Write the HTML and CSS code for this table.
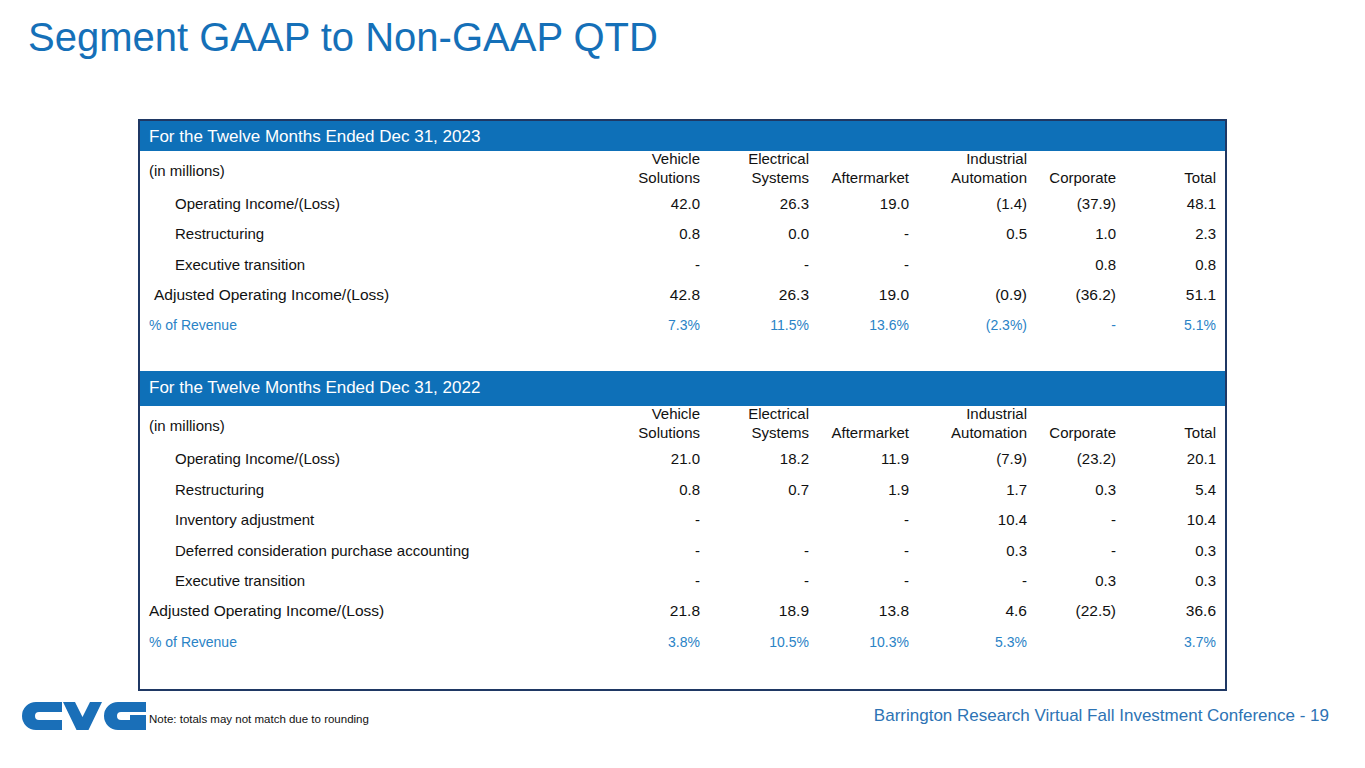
FILE: index.html
```html
<!DOCTYPE html>
<html>
<head>
<meta charset="utf-8">
<link rel="stylesheet" href="styles.css">
</head>
<body>
<h1 class="title">Segment GAAP to Non-GAAP QTD</h1>
<div class="box">
  <div class="band band1">For the Twelve Months Ended Dec 31, 2023</div>
  <div class="row head h1row">
    <div class="label">(in millions)</div>
    <div class="num">Vehicle<br>Solutions</div>
    <div class="num">Electrical<br>Systems</div>
    <div class="num">Aftermarket</div>
    <div class="num">Industrial<br>Automation</div>
    <div class="num">Corporate</div>
    <div class="num">Total</div>
  </div>
  <div class="row"><div class="label sub">Operating Income/(Loss)</div><div class="num">42.0</div><div class="num">26.3</div><div class="num">19.0</div><div class="num">(1.4)</div><div class="num">(37.9)</div><div class="num">48.1</div></div>
  <div class="row"><div class="label sub">Restructuring</div><div class="num">0.8</div><div class="num">0.0</div><div class="num">-</div><div class="num">0.5</div><div class="num">1.0</div><div class="num">2.3</div></div>
  <div class="row"><div class="label sub">Executive transition</div><div class="num">-</div><div class="num">-</div><div class="num">-</div><div class="num"></div><div class="num">0.8</div><div class="num">0.8</div></div>
  <div class="row adj"><div class="label lead">Adjusted Operating Income/(Loss)</div><div class="num">42.8</div><div class="num">26.3</div><div class="num">19.0</div><div class="num">(0.9)</div><div class="num">(36.2)</div><div class="num">51.1</div></div>
  <div class="row pct"><div class="label">% of Revenue</div><div class="num">7.3%</div><div class="num">11.5%</div><div class="num">13.6%</div><div class="num">(2.3%)</div><div class="num">-</div><div class="num">5.1%</div></div>
  <div class="spacer"></div>
  <div class="band band2">For the Twelve Months Ended Dec 31, 2022</div>
  <div class="row head h2row">
    <div class="label">(in millions)</div>
    <div class="num">Vehicle<br>Solutions</div>
    <div class="num">Electrical<br>Systems</div>
    <div class="num">Aftermarket</div>
    <div class="num">Industrial<br>Automation</div>
    <div class="num">Corporate</div>
    <div class="num">Total</div>
  </div>
  <div class="row"><div class="label sub">Operating Income/(Loss)</div><div class="num">21.0</div><div class="num">18.2</div><div class="num">11.9</div><div class="num">(7.9)</div><div class="num">(23.2)</div><div class="num">20.1</div></div>
  <div class="row"><div class="label sub">Restructuring</div><div class="num">0.8</div><div class="num">0.7</div><div class="num">1.9</div><div class="num">1.7</div><div class="num">0.3</div><div class="num">5.4</div></div>
  <div class="row"><div class="label sub">Inventory adjustment</div><div class="num">-</div><div class="num"></div><div class="num">-</div><div class="num">10.4</div><div class="num">-</div><div class="num">10.4</div></div>
  <div class="row"><div class="label sub">Deferred consideration purchase accounting</div><div class="num">-</div><div class="num">-</div><div class="num">-</div><div class="num">0.3</div><div class="num">-</div><div class="num">0.3</div></div>
  <div class="row"><div class="label sub">Executive transition</div><div class="num">-</div><div class="num">-</div><div class="num">-</div><div class="num">-</div><div class="num">0.3</div><div class="num">0.3</div></div>
  <div class="row adj"><div class="label">Adjusted Operating Income/(Loss)</div><div class="num">21.8</div><div class="num">18.9</div><div class="num">13.8</div><div class="num">4.6</div><div class="num">(22.5)</div><div class="num">36.6</div></div>
  <div class="row pct"><div class="label">% of Revenue</div><div class="num">3.8%</div><div class="num">10.5%</div><div class="num">10.3%</div><div class="num">5.3%</div><div class="num"></div><div class="num">3.7%</div></div>
  <div class="spacer end"></div>
</div>
<div class="footer">
  <svg class="logo" viewBox="0 0 124 28" width="124" height="28" aria-label="CVG">
    <path fill="#1a6fb8" d="M40 0 H14 A14 14 0 0 0 14 28 H40 V18 H17 A4 4 0 0 1 17 10 H40 Z"/>
    <path fill="#1a6fb8" d="M41 0 H53 L60.5 15 L68 0 H80 L66.5 28 H54.5 Z"/>
    <path fill="#1a6fb8" d="M124 0 H96 A14 14 0 0 0 96 28 H124 V13 H108 V18 H99 A4 4 0 0 1 99 10 H124 Z"/>
  </svg>
  <span class="note">Note: totals may not match due to rounding</span>
  <span class="conf">Barrington Research Virtual Fall Investment Conference - 19</span>
</div>
</body>
</html>
```
FILE: styles.css
```css
html, body {
  margin: 0;
  padding: 0;
  background: #ffffff;
  font-family: "Liberation Sans", Arial, sans-serif;
  color: #111111;
}
.title {
  margin: 15px 0 0 28px;
  font-size: 40px;
  line-height: 45px;
  font-weight: normal;
  color: #1570b8;
}
.box {
  margin: 59px 0 0 138px;
  width: 1085px;
  border: 2px solid #1f3864;
}
.band {
  background: #0e70b8;
  color: #ffffff;
  font-size: 17px;
  padding-left: 9px;
  display: flex;
  align-items: center;
}
.band1 { height: 30px; padding-top: 1px; box-sizing: border-box; }
.band2 { height: 35px; }
.row {
  display: grid;
  grid-template-columns: 1fr 100px 109px 100px 118px 89px 100px;
  padding: 0 9px;
  height: 30.5px;
  font-size: 15px;
  align-items: center;
}
.row .num { text-align: right; }
.head { line-height: 19px; }
.head .label { padding-top: 2px; }
.head .num {
  height: 38px;
  display: flex;
  align-items: flex-end;
  justify-content: flex-end;
}
.h1row { height: 37px; }
.h1row .num { margin-top: -4px; }
.h2row { height: 38px; }
.h2row .num { margin-top: -3px; }
.sub { padding-left: 26px; }
.lead { padding-left: 5px; }
.adj { font-size: 15.5px; }
.pct { font-size: 14px; color: #2a83c6; }
.spacer { height: 30px; }
.spacer.end { height: 32px; }
.footer {
  display: flex;
  align-items: center;
  margin: 11px 0 0 22px;
  width: 1307px;
}
.logo { display: block; }
.note {
  font-size: 11.5px;
  margin-left: 3px;
  padding-top: 6px;
  color: #111111;
}
.conf {
  margin-left: auto;
  font-size: 17px;
  color: #2d73b4;
}
```
